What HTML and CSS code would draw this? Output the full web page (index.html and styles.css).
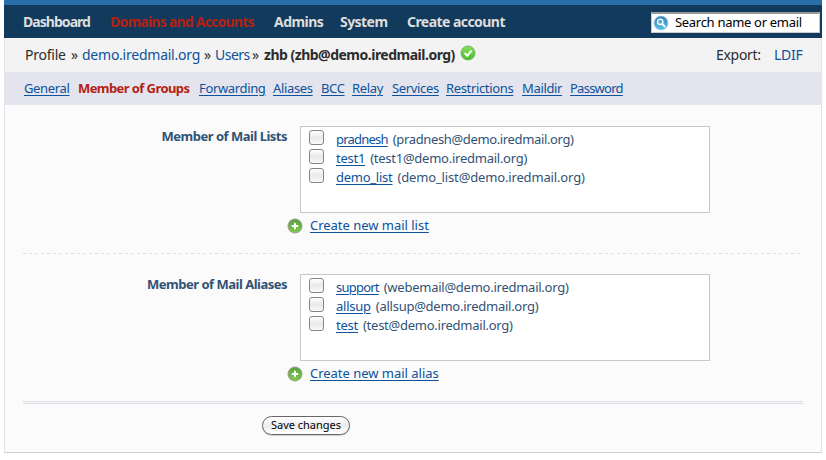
FILE: index.html
```html
<!DOCTYPE html>
<html lang="en">
<head>
<meta charset="utf-8">
<title>iRedAdmin</title>
<link rel="stylesheet" href="styles.css">
</head>
<body>
<svg width="0" height="0" class="defs" aria-hidden="true">
  <defs>
    <linearGradient id="green" x1="0" y1="0" x2="0" y2="1"><stop offset="0" stop-color="#8be05a"/><stop offset="1" stop-color="#45bd2c"/></linearGradient>
    <linearGradient id="leaf" x1="0" y1="0" x2="0" y2="1"><stop offset="0" stop-color="#59a03f"/><stop offset="1" stop-color="#7dcc45"/></linearGradient>
    <linearGradient id="blue" x1="0" y1="0" x2="0" y2="1"><stop offset="0" stop-color="#2f7fb8"/><stop offset="1" stop-color="#55c5ec"/></linearGradient>
    <symbol id="add" viewBox="0 0 16 16"><circle cx="8" cy="8" r="7" fill="url(#leaf)" stroke="#999d94"/><path d="M8 4.7v6.6M4.7 8h6.6" stroke="#fff" stroke-width="2"/></symbol>
  </defs>
</svg>
<div class="page">
  <header class="nav">
    <nav class="menu">
      <a class="tight">Dashboard</a><a class="current">Domains and Accounts</a><a>Admins</a><a>System</a><a>Create account</a>
    </nav>
    <div class="search">
      <svg width="16" height="16" viewBox="0 0 16 16"><circle cx="8" cy="8" r="7" fill="url(#blue)" stroke="#a8c9dc" stroke-width=".7"/><circle cx="7.2" cy="6.8" r="2.7" fill="#5ba6d4" stroke="#fff" stroke-width="1.4"/><path d="m9.3 9 3 3" stroke="#fff" stroke-width="1.8"/></svg>
      <span>Search name or email</span>
    </div>
  </header>
  <div class="crumbs">
    <div class="trail">
      <span class="wide">Profile</span><span>»</span><a class="wide">demo.iredmail.org</a><span>»</span><a>Users</a><span>»</span><b>zhb (zhb@demo.iredmail.org)</b>
      <svg width="16" height="16" viewBox="0 0 16 16"><circle cx="8" cy="8" r="7" fill="url(#green)" stroke="#65a95a" stroke-width=".8"/><path d="m4.6 8 2.6 2.7 4.4-5" fill="none" stroke="#fff" stroke-width="2"/></svg>
    </div>
    <div class="export"><span>Export:</span><a>LDIF</a></div>
  </div>
  <nav class="tabs">
    <a>General</a><b>Member of Groups</b><a>Forwarding</a><a>Aliases</a><a>BCC</a><a>Relay</a><a>Services</a><a>Restrictions</a><a>Maildir</a><a class="tight">Password</a>
  </nav>
  <main class="content">
    <section class="group">
      <h4>Member of Mail Lists</h4>
      <div class="field">
        <ul class="box">
          <li><i class="check"></i><a class="tight">pradnesh</a> <span class="snug">(pradnesh@demo.iredmail.org)</span></li>
          <li><i class="check"></i><a>test1</a> <span>(test1@demo.iredmail.org)</span></li>
          <li><i class="check"></i><a>demo_list</a> <span class="loose">(demo_list@demo.iredmail.org)</span></li>
        </ul>
        <div class="create"><svg width="16" height="16"><use href="#add"/></svg><a>Create new mail list</a></div>
      </div>
    </section>
    <svg class="dash" width="780" height="1"><path d="M0 .5h780" stroke="#dedede" stroke-dasharray="3 3"/></svg>
    <section class="group">
      <h4>Member of Mail Aliases</h4>
      <div class="field">
        <ul class="box">
          <li><i class="check"></i><a class="tight">support</a> <span>(webemail@demo.iredmail.org)</span></li>
          <li><i class="check"></i><a>allsup</a> <span>(allsup@demo.iredmail.org)</span></li>
          <li><i class="check"></i><a>test</a> <span>(test@demo.iredmail.org)</span></li>
        </ul>
        <div class="create"><svg width="16" height="16"><use href="#add"/></svg><a>Create new mail alias</a></div>
      </div>
    </section>
    <div class="rule"></div>
    <button class="save">Save changes</button>
  </main>
</div>
</body>
</html>
```
FILE: styles.css
```css
* { box-sizing: border-box; }
body { margin: 0; background: #fff; font: 13px/19px "Trebuchet MS", "Noto Sans", sans-serif; color: #2c2c2c; white-space: nowrap; }
.defs { position: absolute; }
a { color: #0d529b; }
svg { display: block; }
.page { width: 818px; height: 453px; margin-left: 4px; }
.nav { height: 38px; background: #123a5d; border-top: 5px solid #286fa9; display: flex; justify-content: space-between; padding: 0 2px 0 19px; }
.menu { display: grid; grid-template-columns: 87px 164px 66px 67px 110px; align-items: center; margin-top: -1px; font-size: 14px; font-weight: 700; letter-spacing: -.55px; }
.menu a { color: #dedede; }
.menu .current { color: #b51f12; letter-spacing: -.77px; }
.menu .tight { letter-spacing: -.95px; }
.search { width: 169px; height: 21px; margin-top: 7px; background: #fff; border: 1px solid #ccc; border-top: 2px solid #999; display: flex; align-items: center; gap: 6px; padding: 0 0 1px 1px; color: #000; letter-spacing: -.3px; }
.crumbs { height: 34px; background: #f3f3f3; border: solid #dfe4ee; border-width: 0 1px; display: flex; justify-content: space-between; align-items: center; padding: 0 19px 1px 20px; font-size: 14px; }
.trail { display: grid; grid-template-columns: 46px 11px 122px 11px 37px 12px 196px 16px; letter-spacing: -.5px; }
.trail .wide { letter-spacing: -.24px; }
.export { display: grid; grid-template-columns: 58px 28px; letter-spacing: -.3px; }
.tabs { height: 33px; background: #e3e4ed; display: grid; grid-template-columns: 54px 121px 74px 48px 31px 40px 54px 76px 48px 60px; align-items: center; padding-left: 20px; letter-spacing: -.35px; }
.tabs a, .box a, .create a { text-decoration: underline; text-underline-offset: 2px; text-decoration-thickness: 1px; }
.tabs b { color: #b51f12; letter-spacing: -.58px; }
.tabs .tight { letter-spacing: -.75px; }
.content { height: 348px; background: #fbfbfb; border: solid #dfe4ee; border-width: 0 1px 1px; border-bottom-color: #c8d0d8; padding: 21px 18px 0; }
.group { display: flex; height: 127px; }
h4 { width: 264px; margin: 1px 13px 0 0; font-size: 13px; text-align: right; color: #315275; letter-spacing: -.5px; }
.field { width: 410px; }
.box { height: 87px; margin: 0; padding: 3px 0 0 7px; list-style: none; background: #fff; border: 1px solid #c8c8c8; color: #315275; letter-spacing: -.25px; }
.box li { height: 19px; display: flex; align-items: center; }
.box span { margin-left: 5px; }
.box .tight { letter-spacing: -.78px; }
.box .snug { letter-spacing: -.36px; }
.box .loose { letter-spacing: -.15px; }
.check { width: 15px; height: 15px; margin: -5px 12px 0 1px; border: 1px solid #858585; border-radius: 3px; background: linear-gradient(#fff, #e9e9e9 50%, #fafafa); }
.create { display: flex; align-items: center; gap: 7px; margin: 3px 0 0 -13px; letter-spacing: -.02px; }
.dash { margin-bottom: 20px; }
.rule { height: 3px; border: solid #d8dee3; border-width: 1px 0; }
.save { display: block; width: 88px; height: 19px; margin: 12px 0 0 239px; padding: 0 0 2px; border: 1.5px solid #666; border-radius: 10px; background: linear-gradient(#fff, #ededed 50%, #fff); box-shadow: 0 1px 1px #ccc; font: 11px/14px "Trebuchet MS", "Noto Sans", sans-serif; color: #000; }
```
